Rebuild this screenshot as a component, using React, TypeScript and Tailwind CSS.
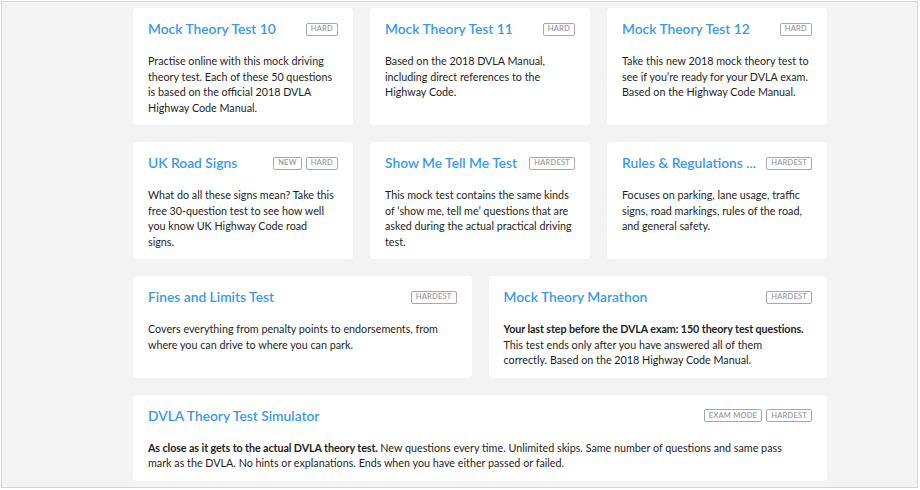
import React from "react";

type Test = {
  title: string;
  badges: string[];
  lead?: string;
  text: string;
};

const rowOne: Test[] = [
  {
    title: "Mock Theory Test 10",
    badges: ["HARD"],
    text: "Practise online with this mock driving theory test. Each of these 50 questions is based on the official 2018 DVLA Highway Code Manual.",
  },
  {
    title: "Mock Theory Test 11",
    badges: ["HARD"],
    text: "Based on the 2018 DVLA Manual, including direct references to the Highway Code.",
  },
  {
    title: "Mock Theory Test 12",
    badges: ["HARD"],
    text: "Take this new 2018 mock theory test to see if you\u2019re ready for your DVLA exam. Based on the Highway Code Manual.",
  },
];

const rowTwo: Test[] = [
  {
    title: "UK Road Signs",
    badges: ["NEW", "HARD"],
    text: "What do all these signs mean? Take this free 30-question test to see how well you know UK Highway Code road\nsigns.",
  },
  {
    title: "Show Me Tell Me Test",
    badges: ["HARDEST"],
    text: "This mock test contains the same kinds of \u2018show me, tell me\u2019 questions that are asked during the actual practical driving test.",
  },
  {
    title: "Rules & Regulations ...",
    badges: ["HARDEST"],
    text: "Focuses on parking, lane usage, traffic signs, road markings, rules of the road, and general safety.",
  },
];

const rowThree: Test[] = [
  {
    title: "Fines and Limits Test",
    badges: ["HARDEST"],
    text: "Covers everything from penalty points to endorsements, from where you can drive to where you can park.",
  },
  {
    title: "Mock Theory Marathon",
    badges: ["HARDEST"],
    lead: "Your last step before the DVLA exam: 150 theory test questions.",
    text: "This test ends only after you have answered all of them\ncorrectly. Based on the 2018 Highway Code Manual.",
  },
];

const simulator: Test = {
  title: "DVLA Theory Test Simulator",
  badges: ["EXAM MODE", "HARDEST"],
  lead: "As close as it gets to the actual DVLA theory test.",
  text: "New questions every time. Unlimited skips. Same number of questions and same pass\nmark as the DVLA. No hints or explanations. Ends when you have either passed or failed.",
};

function Badge({ label }: { label: string }) {
  return (
    <span className="h-[13px] px-[4px] flex items-center border border-[#a8a8a8] rounded-[2px] text-[7.5px] font-semibold tracking-[0.03em] text-[#9a9a9a] leading-none">
      {label}
    </span>
  );
}

function TestCard({ test }: { test: Test }) {
  return (
    <div className="bg-white rounded-[4px] px-[15px] pt-[11px] pb-[10px]">
      <div className="flex items-center gap-2 h-[20px]">
        <h3 className="flex-1 min-w-0 truncate text-[13.8px] font-semibold leading-[20px] text-[#3a9aea]">
          {test.title}
        </h3>
        <div className="flex gap-[4px] shrink-0">
          {test.badges.map((b) => (
            <Badge key={b} label={b} />
          ))}
        </div>
      </div>
      <p className="mt-[14px] whitespace-pre-line text-[10.75px] leading-[15.5px] text-[#1e1e1e]">
        {test.lead && (
          <span className="font-bold tracking-[-0.1px]">{test.lead} </span>
        )}
        {test.text}
      </p>
    </div>
  );
}

export default function App() {
  return (
    <div
      className="w-[920px] h-[490px] bg-white pl-px pt-px pr-[2px] pb-[2px]"
      style={{ fontFamily: "Lato, 'Noto Sans', sans-serif" }}
    >
      <div className="h-full border border-[#d6d6d6] bg-[#f3f3f3] pl-[131px] pt-[6px] overflow-hidden">
        <div className="w-[694px] flex flex-col gap-[17px]">
          <div className="grid grid-cols-3 gap-[17px]">
            {rowOne.map((t) => (
              <TestCard key={t.title} test={t} />
            ))}
          </div>
          <div className="grid grid-cols-3 gap-[17px]">
            {rowTwo.map((t) => (
              <TestCard key={t.title} test={t} />
            ))}
          </div>
          <div className="grid grid-cols-2 gap-[17px]">
            {rowThree.map((t) => (
              <TestCard key={t.title} test={t} />
            ))}
          </div>
          <TestCard test={simulator} />
        </div>
      </div>
    </div>
  );
}
